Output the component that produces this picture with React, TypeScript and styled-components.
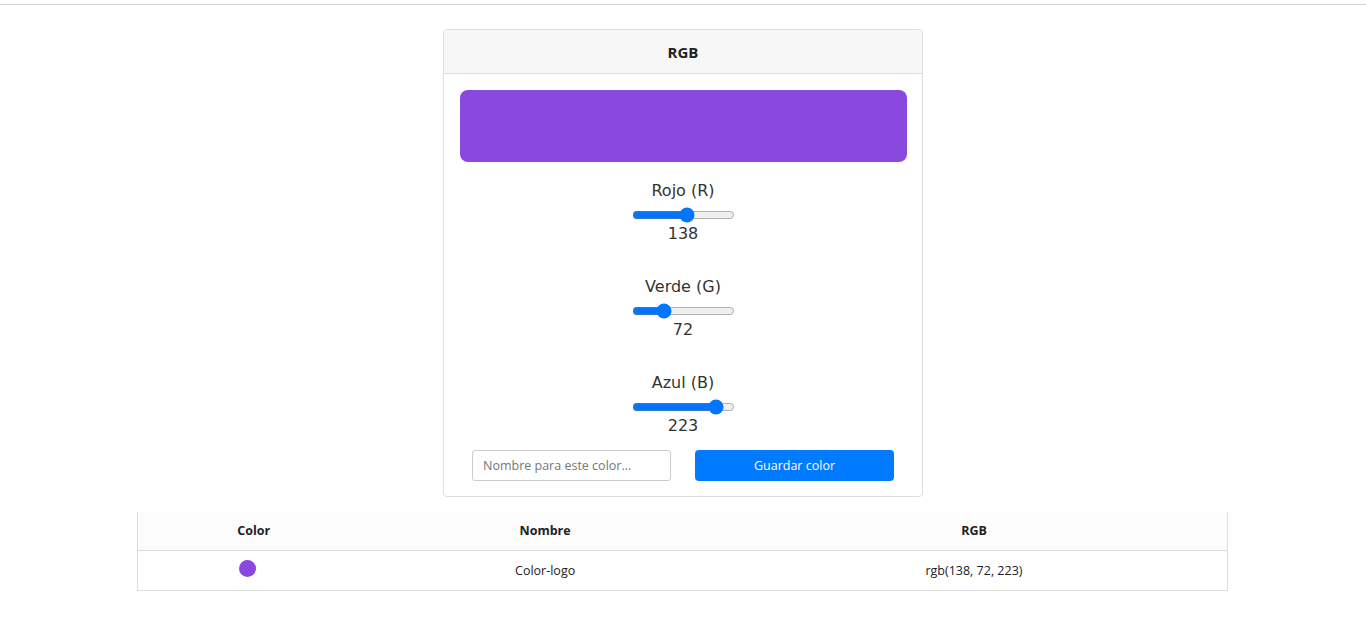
import React, { useState } from "react";
import styled, { createGlobalStyle } from "styled-components";

const Global = createGlobalStyle`
  html, body { margin: 0; padding: 0; background: #fff; }
  body { font-family: "Open Sans", "Noto Sans", sans-serif; color: #212529; }
  * { box-sizing: border-box; }
`;

const Page = styled.div`
  display: flex;
  flex-direction: column;
  align-items: center;
  padding-top: 4px;
`;

const TopRule = styled.div`
  align-self: stretch;
  height: 1px;
  background: #cfcfcf;
  margin-bottom: 24px;
`;

const Card = styled.section`
  width: 480px;
  border: 1px solid #dedede;
  border-radius: 4px;
  background: #fff;
  margin-bottom: 15px;
`;

const CardHeader = styled.header`
  height: 44px;
  display: flex;
  align-items: center;
  justify-content: center;
  background: #f7f7f7;
  border-bottom: 1px solid #dedede;
  border-radius: 4px 4px 0 0;
  font-weight: 700;
  font-size: 15px;
  color: #222;
`;

const CardBody = styled.div`
  padding: 16px 16px 15px;
  display: flex;
  flex-direction: column;
`;

const Preview = styled.div<{ $color: string }>`
  height: 72px;
  border-radius: 8px;
  background: ${(p) => p.$color};
  margin: 0 -1px 19px 0;
`;

const Sliders = styled.div`
  display: flex;
  flex-direction: column;
  gap: 34px;
  margin-bottom: 15px;
`;

const SliderGroup = styled.div`
  display: flex;
  flex-direction: column;
  align-items: center;
  font-family: "DejaVu Sans", Verdana, sans-serif;
  font-size: 16px;
  line-height: 19px;
  color: #333;
`;

const SliderLabel = styled.label`
  display: block;
  margin-bottom: 7px;
`;

const Range = styled.input`
  width: 103px;
  height: 16px;
  margin: 0 0 1px;
  accent-color: #0075ff;
`;

const SliderValue = styled.span`
  display: block;
`;

const SaveRow = styled.div`
  display: flex;
  justify-content: space-around;
`;

const NameInput = styled.input`
  width: 199px;
  height: 31px;
  border: 1px solid #cccccc;
  border-radius: 3px;
  padding: 0 10px;
  font-family: "Open Sans", sans-serif;
  font-size: 12.5px;
  color: #333;
  &::placeholder { color: #767676; }
`;

const SaveButton = styled.button`
  width: 199px;
  height: 31px;
  border: none;
  border-radius: 4px;
  background: #007bff;
  color: #fff;
  font-family: "Open Sans", sans-serif;
  font-size: 12.5px;
  cursor: pointer;
`;

const Table = styled.table`
  width: 1091px;
  margin-right: 1px;
  border-collapse: collapse;
  font-size: 12.5px;
  color: #222;
  border-left: 1px solid #dcdcdc;
  border-right: 1px solid #dcdcdc;
`;

const HeadCell = styled.th<{ $w: number }>`
  width: ${(p) => p.$w}px;
  height: 38px;
  background: #fcfcfc;
  font-weight: 700;
  text-align: center;
  border-bottom: 1px solid #dcdcdc;
  padding: 0;
`;

const Cell = styled.td`
  height: 40px;
  text-align: center;
  border-bottom: 1px solid #dcdcdc;
  padding: 0;
`;

const Swatch = styled.span<{ $color: string }>`
  display: inline-block;
  width: 17px;
  height: 17px;
  border-radius: 50%;
  background: ${(p) => p.$color};
  margin: 0 12px 4px 0;
  vertical-align: middle;
`;

type Channel = { key: "r" | "g" | "b"; label: string };
const channels: Channel[] = [
  { key: "r", label: "Rojo (R)" },
  { key: "g", label: "Verde (G)" },
  { key: "b", label: "Azul (B)" },
];

export default function App() {
  const [rgb, setRgb] = useState({ r: 138, g: 72, b: 223 });
  const color = `rgb(${rgb.r}, ${rgb.g}, ${rgb.b})`;
  return (
    <>
      <Global />
      <Page>
        <TopRule />
        <Card>
          <CardHeader>RGB</CardHeader>
          <CardBody>
            <Preview $color={color} />
            <Sliders>
              {channels.map((c) => (
                <SliderGroup key={c.key}>
                  <SliderLabel>{c.label}</SliderLabel>
                  <Range
                    type="range"
                    min={0}
                    max={255}
                    value={rgb[c.key]}
                    onChange={(e) => setRgb({ ...rgb, [c.key]: Number(e.target.value) })}
                  />
                  <SliderValue>{rgb[c.key]}</SliderValue>
                </SliderGroup>
              ))}
            </Sliders>
            <SaveRow>
              <NameInput placeholder="Nombre para este color..." />
              <SaveButton>Guardar color</SaveButton>
            </SaveRow>
          </CardBody>
        </Card>
        <Table>
          <thead>
            <tr>
              <HeadCell $w={232}>Color</HeadCell>
              <HeadCell $w={352}>Nombre</HeadCell>
              <HeadCell $w={507}>RGB</HeadCell>
            </tr>
          </thead>
          <tbody>
            <tr>
              <Cell>
                <Swatch $color="rgb(138, 72, 223)" />
              </Cell>
              <Cell>Color-logo</Cell>
              <Cell>rgb(138, 72, 223)</Cell>
            </tr>
          </tbody>
        </Table>
      </Page>
    </>
  );
}
